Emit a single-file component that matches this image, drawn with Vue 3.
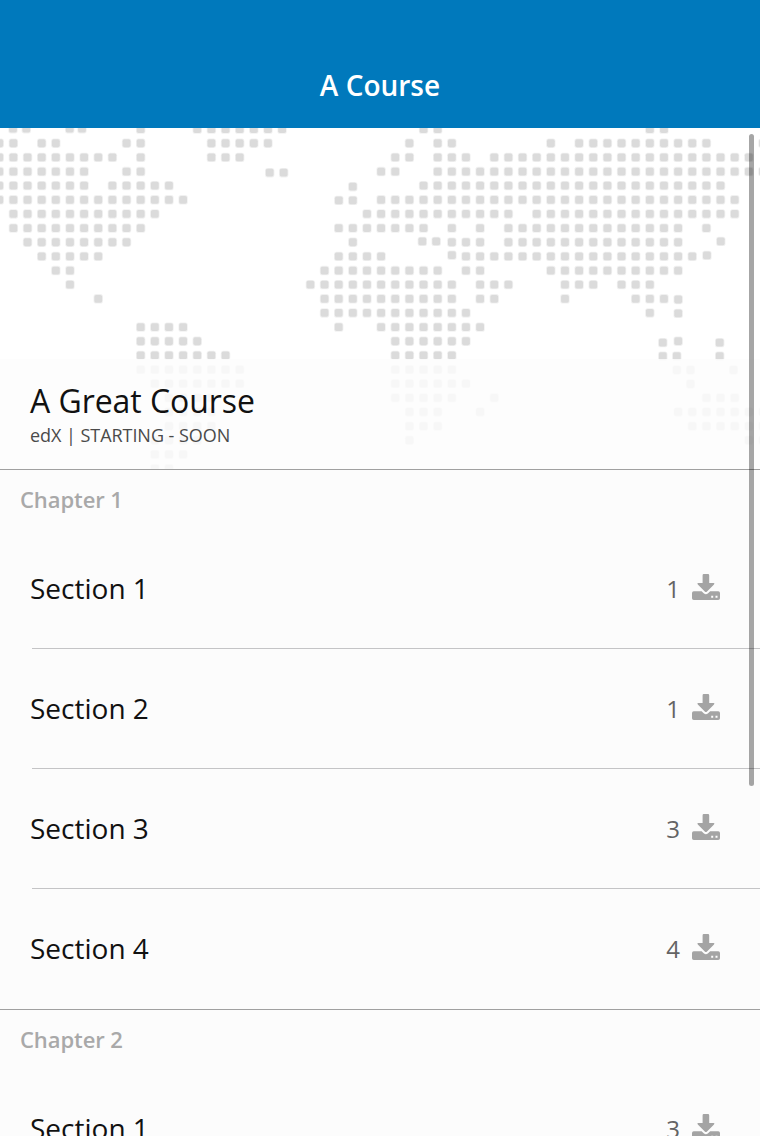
<script setup>
const PITCH = 14.143
const X0 = -0.75
const Y0 = 129.1 - 128

// Dotted world map: each row lists inclusive column ranges.
const rows = [
  [[10, 10], [14, 20], [30, 31], [46, 47]],
  [[0, 1], [3, 4], [9, 10], [15, 19], [29, 29], [31, 32], [39, 39], [41, 50], [54, 54]],
  [[0, 8], [10, 10], [15, 17], [28, 29], [31, 33], [35, 53]],
  [[0, 6], [9, 10], [27, 28], [31, 54]],
  [[0, 6], [8, 12], [30, 51]],
  [[0, 13], [27, 52]],
  [[1, 11], [26, 36], [38, 52]],
  [[1, 10], [24, 30], [32, 32], [34, 34], [36, 48], [50, 50]],
  [[2, 9], [25, 25], [32, 34], [36, 48]],
  [[3, 7], [24, 27], [33, 49]],
  [[4, 5], [23, 31], [33, 34], [39, 48]],
  [[5, 5], [22, 32], [34, 36], [40, 42], [44, 46]],
  [[7, 7], [23, 32], [34, 35], [40, 40], [45, 47]],
  [[23, 33], [46, 46]],
  [[10, 13], [24, 24], [27, 34]],
  [[10, 14], [28, 33]],
  [[10, 16], [28, 32]],
  [[10, 17], [28, 32]],
  [[11, 17], [28, 33]],
  [[12, 15], [28, 32], [35, 35], [50, 52]],
  [[12, 15], [29, 31], [34, 34], [48, 54]],
  [[12, 15], [29, 31], [49, 54]],
  [[11, 14], [29, 29], [53, 54]],
  [[11, 13]],
  [[11, 12]],
]

// Islands that sit off the regular grid (centre x, centre y).
const islands = [
  [13, 0.7], [26.3, 0.7], [69.7, 0.7], [82, 0.7],
  [269.7, 44.7], [283.7, 44.7], [352.8, 58.7], [338.8, 72.4], [352.8, 72.4],
  [422.3, 113.4], [436.2, 113.4], [451.9, 127.2], [720.8, 113.4], [706.9, 127.4],
  [678.2, 171.5], [678.2, 185.4], [662.8, 214.6], [678.2, 213.2], [719.7, 214.6],
  [662.8, 228.2], [676.8, 228.2], [719.7, 228.2],
  [676.8, 242], [690.5, 242], [733.5, 242], [690.5, 256],
]

const dots = rows
  .flatMap((ranges, r) =>
    ranges.flatMap(([a, b]) =>
      Array.from({ length: b - a + 1 }, (_, i) => [X0 + PITCH * (a + i), Y0 + PITCH * r])
    )
  )
  .concat(islands)

const chapters = [
  {
    title: 'Chapter 1',
    sections: [
      { name: 'Section 1', count: 1 },
      { name: 'Section 2', count: 1 },
      { name: 'Section 3', count: 3 },
      { name: 'Section 4', count: 4 },
    ],
  },
  { title: 'Chapter 2', sections: [{ name: 'Section 1', count: 3 }] },
]
</script>

<template>
  <div class="screen">
    <header class="navbar"><h1>A Course</h1></header>
    <main>
      <section class="hero">
        <svg class="map" width="760" height="341" viewBox="0 0 760 341">
          <rect
            v-for="([x, y], i) in dots"
            :key="i"
            :x="x - 3.9"
            :y="y - 3.9"
            width="7.8"
            height="7.8"
            rx="1.8"
          />
        </svg>
        <div class="caption">
          <h2>A Great Course</h2>
          <p>edX | STARTING - SOON</p>
        </div>
      </section>
      <section v-for="ch in chapters" :key="ch.title" class="chapter">
        <h3>{{ ch.title }}</h3>
        <ul>
          <li v-for="s in ch.sections" :key="s.name">
            <span class="name">{{ s.name }}</span>
            <span class="count">{{ s.count }}</span>
            <svg class="download" width="28" height="28" viewBox="0 0 28 28">
              <path d="M10.6 1.2Q10.6 0 11.8 0H16Q17.2 0 17.2 1.2V9H21.4Q23.2 9 22 10.4L15 17.4Q13.9 18.4 12.8 17.4L5.8 10.4Q4.6 9 6.4 9H10.6Z" />
              <path
                fill-rule="evenodd"
                d="M1.8 17.2H9.6L12 19.5Q13.9 21 15.8 19.5L18.2 17.2H26.2Q28 17.2 28 19V24.2Q28 26 26.2 26H1.8Q0 26 0 24.2V19Q0 17.2 1.8 17.2ZM19.2 21.7V23.7H21.2V21.7ZM23.5 21.7V23.7H25.5V21.7Z"
              />
            </svg>
          </li>
        </ul>
      </section>
    </main>
    <div class="scrollbar"></div>
  </div>
</template>

<style>
body {
  background: #fcfcfc;
}
</style>

<style scoped>
.screen {
  position: relative;
  width: 760px;
  height: 1136px;
  overflow: hidden;
  background: #fcfcfc;
  font-family: "Open Sans", "Noto Sans", sans-serif;
  color: #111;
}
h1, h2, h3, p, ul {
  margin: 0;
  padding: 0;
  font-weight: 400;
}
.navbar {
  height: 128px;
  box-sizing: border-box;
  padding-top: 65px;
  background: #0079bc;
  text-align: center;
}
h1 {
  font-size: 28px;
  line-height: 40px;
  font-weight: 600;
  color: #fff;
}
.hero {
  position: relative;
  height: 341px;
  background: #fff;
}
.map {
  display: block;
  fill: #dbdbdb;
  stroke: rgba(219, 219, 219, 0.4);
  stroke-width: 1.6px;
}
.caption {
  position: absolute;
  left: 0;
  right: 0;
  bottom: 0;
  height: 110px;
  box-sizing: border-box;
  padding: 20px 30px 0;
  background: rgba(252, 252, 252, 0.82);
}
h2 {
  font-size: 32px;
  line-height: 44px;
  letter-spacing: -0.06px;
}
.caption p {
  font-size: 18px;
  line-height: 24px;
  letter-spacing: -0.05px;
  color: #4a4a4a;
}
.chapter {
  border-top: 1px solid #a0a0a0;
}
h3 {
  height: 59px;
  padding-left: 20px;
  font-size: 22px;
  line-height: 58px;
  letter-spacing: -0.08px;
  font-weight: 600;
  color: #a9a9a9;
}
ul {
  list-style: none;
}
li {
  display: flex;
  align-items: center;
  height: 120px;
  box-sizing: border-box;
  margin-left: 32px;
  padding-right: 40px;
  border-bottom: 1px solid #c4c4c6;
}
li:last-child {
  border-bottom-color: transparent;
}
.name {
  flex: 1;
  margin-left: -2px;
  padding-bottom: 2px;
  font-size: 28px;
}
.count {
  margin-right: 12px;
  font-size: 24px;
  color: #646464;
}
.download {
  margin-bottom: 2px;
  fill: #a4a4a4;
}
.scrollbar {
  position: absolute;
  top: 134px;
  left: 749px;
  width: 5px;
  height: 652px;
  border-radius: 2.5px;
  background: rgba(0, 0, 0, 0.35);
}
</style>
